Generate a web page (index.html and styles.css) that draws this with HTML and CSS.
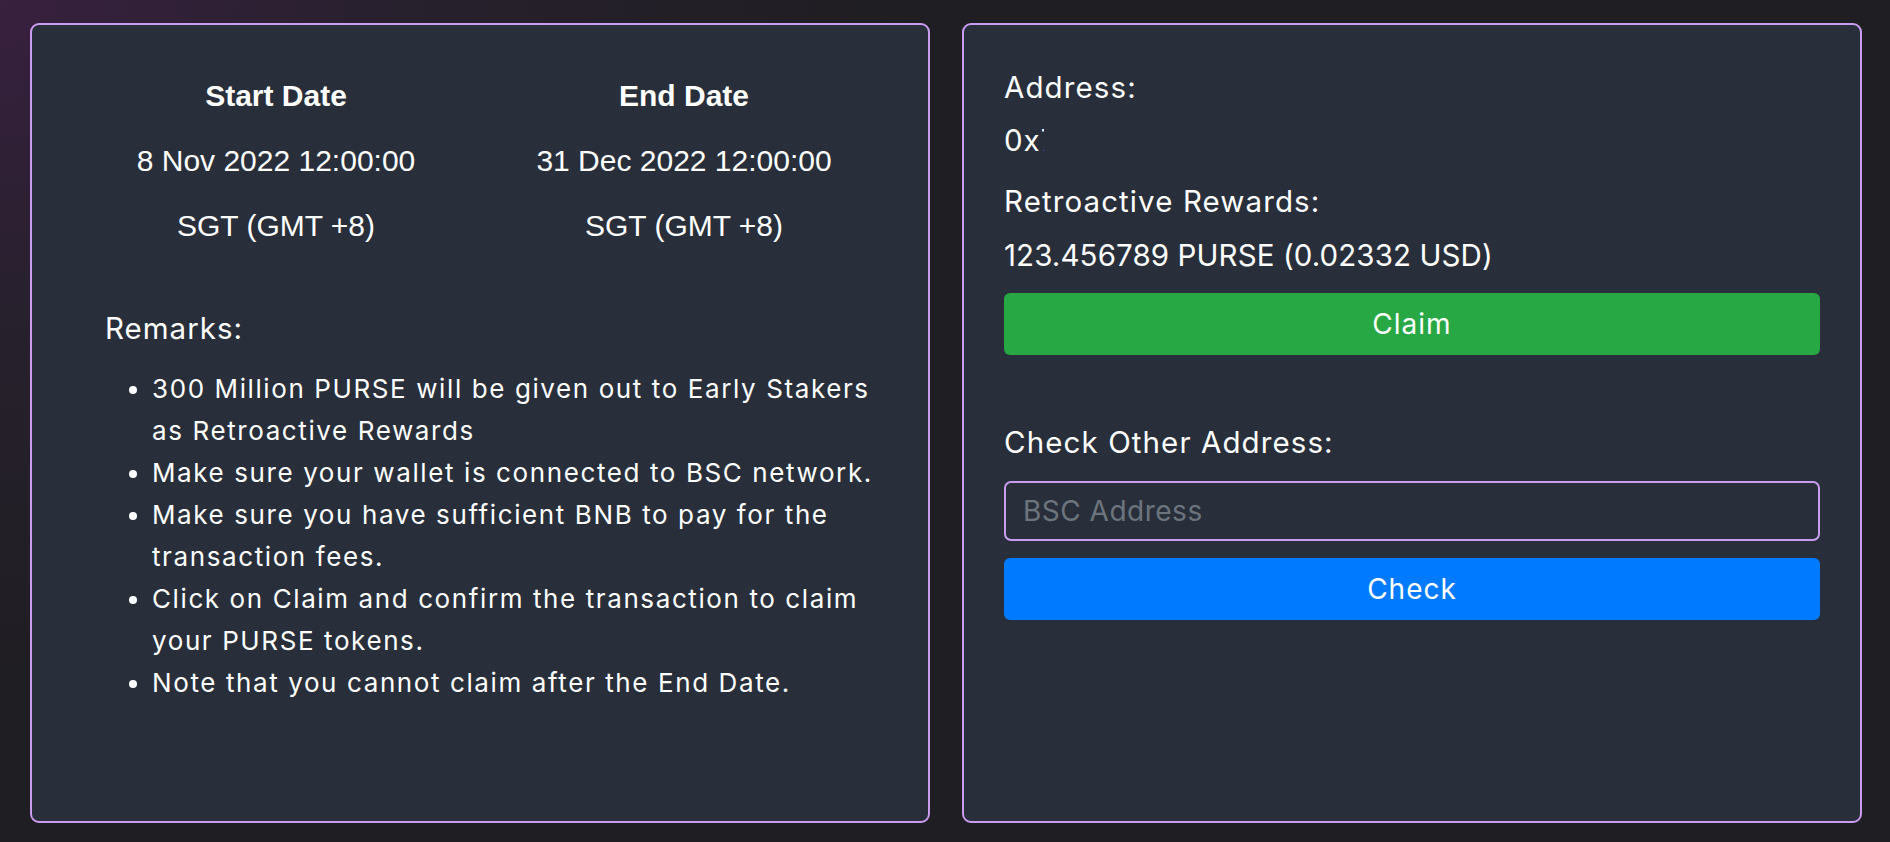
FILE: index.html
```html
<!DOCTYPE html>
<html lang="en">
<head>
<meta charset="utf-8">
<title>Retroactive Rewards</title>
<link rel="stylesheet" href="styles.css">
</head>
<body>
<div class="page">
  <section class="card card-info">
    <div class="dates">
      <div class="date-col">
        <p class="date-head">Start Date</p>
        <p class="date-line">8 Nov 2022 12:00:00</p>
        <p class="date-line">SGT (GMT +8)</p>
      </div>
      <div class="date-col">
        <p class="date-head">End Date</p>
        <p class="date-line">31 Dec 2022 12:00:00</p>
        <p class="date-line">SGT (GMT +8)</p>
      </div>
    </div>
    <div class="remarks">
      <p class="remarks-title">Remarks:</p>
      <ul class="remarks-list">
        <li>300 Million PURSE will be given out to Early Stakers as Retroactive Rewards</li>
        <li>Make sure your wallet is connected to BSC network.</li>
        <li>Make sure you have sufficient BNB to pay for the transaction fees.</li>
        <li>Click on Claim and confirm the transaction to claim your PURSE tokens.</li>
        <li>Note that you cannot claim after the End Date.</li>
      </ul>
    </div>
  </section>
  <section class="card card-claim">
    <p class="label">Address:</p>
    <p class="value value-address"><span class="addr-clip">0x7a3f91c2</span></p>
    <p class="label label-rewards">Retroactive Rewards:</p>
    <p class="value value-amount">123.456789 PURSE (0.02332 USD)</p>
    <button class="btn btn-claim" type="button">Claim</button>
    <p class="label label-check">Check Other Address:</p>
    <input class="addr-input" type="text" placeholder="BSC Address">
    <button class="btn btn-check" type="button">Check</button>
  </section>
</div>
</body>
</html>
```
FILE: styles.css
```css
* { box-sizing: border-box; }
html, body { margin: 0; height: 100%; }
body {
  background: radial-gradient(ellipse 900px 700px at 0 0, #38203f 0%, #27202d 45%, #1f1e22 100%);
  background-color: #1f1e22;
  font-family: "Inter", "Noto Sans", sans-serif;
  color: #ffffff;
}
.page {
  display: flex;
  gap: 32px;
  padding: 23px 28px 0 30px;
}
.card {
  flex: 1;
  height: 800px;
  background: #282f3a;
  border: 2px solid #c99cf0;
  border-radius: 9px;
  padding: 40px;
}
.dates {
  display: flex;
  margin-top: 8px;
}
.date-col { flex: 1; text-align: center; }
.date-col p {
  margin: 0 0 20px;
  font-family: "Liberation Sans", Arial, sans-serif;
  font-size: 30px;
  line-height: 45px;
}
.date-col p:last-child { margin-bottom: 0; }
.date-head { font-weight: 700; }
.remarks { padding: 58px 0 0 33px; }
.remarks-title {
  margin: 0;
  font-size: 29.5px;
  line-height: 45px;
  letter-spacing: 1px;
}
.remarks-list {
  margin: 17px 0 0;
  padding-left: 47px;
  font-size: 26px;
  line-height: 42px;
  letter-spacing: 1.6px;
}
.label, .value {
  margin: 0;
  font-size: 29.5px;
  line-height: 45px;
}
.label { letter-spacing: 1.1px; }
.value-address { margin-top: 8px; letter-spacing: 1px; }
.addr-clip {
  display: inline-block;
  width: 40px;
  overflow: hidden;
  white-space: nowrap;
  vertical-align: top;
}
.label-rewards { margin-top: 16px; }
.value-amount { margin-top: 9px; letter-spacing: 0.1px; }
.btn {
  display: block;
  width: 100%;
  height: 62px;
  border: none;
  border-radius: 6px;
  color: #ffffff;
  font-family: "Inter", "Noto Sans", sans-serif;
  font-size: 28px;
  letter-spacing: 1px;
}
.btn-claim { background: #28a745; margin-top: 15px; }
.label-check { margin-top: 65px; }
.addr-input {
  display: block;
  width: 100%;
  height: 60px;
  margin-top: 16px;
  padding: 0 17px;
  background: transparent;
  border: 2px solid #c99cf0;
  border-radius: 7px;
  color: #ffffff;
  font-family: "Inter", "Noto Sans", sans-serif;
  font-size: 28px;
  letter-spacing: 0.5px;
}
.addr-input::placeholder { color: #6c757d; }
.btn-check { background: #007bff; margin-top: 17px; }
```
